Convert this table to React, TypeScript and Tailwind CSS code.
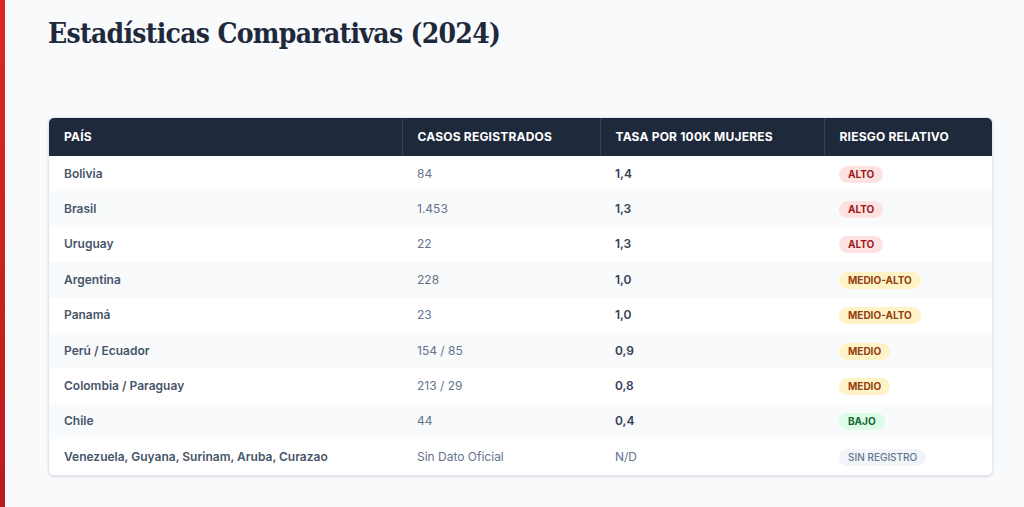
const ROWS = [
  { pais: "Bolivia", casos: "84", tasa: "1,4", riesgo: "ALTO" },
  { pais: "Brasil", casos: "1.453", tasa: "1,3", riesgo: "ALTO" },
  { pais: "Uruguay", casos: "22", tasa: "1,3", riesgo: "ALTO" },
  { pais: "Argentina", casos: "228", tasa: "1,0", riesgo: "MEDIO-ALTO" },
  { pais: "Panamá", casos: "23", tasa: "1,0", riesgo: "MEDIO-ALTO" },
  { pais: "Perú / Ecuador", casos: "154 / 85", tasa: "0,9", riesgo: "MEDIO" },
  { pais: "Colombia / Paraguay", casos: "213 / 29", tasa: "0,8", riesgo: "MEDIO" },
  { pais: "Chile", casos: "44", tasa: "0,4", riesgo: "BAJO" },
  { pais: "Venezuela, Guyana, Surinam, Aruba, Curazao", casos: "Sin Dato Oficial", tasa: "N/D", riesgo: "SIN REGISTRO" },
];

const BADGE: Record<string, string> = {
  ALTO: "bg-[#fee2e2] text-[#991b1b] font-bold",
  "MEDIO-ALTO": "bg-[#fef3c7] text-[#92400e] font-bold",
  MEDIO: "bg-[#fef3c7] text-[#92400e] font-bold",
  BAJO: "bg-[#dcfce7] text-[#166534] font-bold",
  "SIN REGISTRO": "bg-[#f1f5f9] text-[#64748b] font-medium",
};

export default function App() {
  return (
    <div className="flex h-[507px] w-[1024px] overflow-hidden bg-[#f8fafc] font-['Inter',sans-serif]">
      {/* accent strip */}
      <div className="w-[5px] shrink-0 bg-gradient-to-b from-[#dc2626] to-[#b91c1c]" />

      <div className="flex-1 pl-[43px] pr-[31px] pt-[16px]">
        <h1 className="font-['DejaVu_Serif_Condensed','DejaVu_Serif',serif] text-[28px] font-bold leading-[36px] tracking-[-0.7px] text-[#1e293b]">
          Estadísticas Comparativas (2024)
        </h1>

        <div className="mt-[65px] overflow-hidden rounded-md border border-[#e2e8f0] bg-white shadow-sm">
          <table className="w-full table-fixed border-collapse text-left">
            <colgroup>
              <col className="w-[353px]" />
              <col className="w-[198px]" />
              <col className="w-[224px]" />
              <col />
            </colgroup>
            <thead>
              <tr className="h-[38px] bg-[#1e293b] text-[12px] font-bold uppercase tracking-[0.2px] text-white">
                <th className="px-[15px]">País</th>
                <th className="border-l border-[#334155] px-[15px]">Casos Registrados</th>
                <th className="border-l border-[#334155] px-[15px]">Tasa por 100k Mujeres</th>
                <th className="border-l border-[#334155] px-[15px]">Riesgo Relativo</th>
              </tr>
            </thead>
            <tbody>
              {ROWS.map((r, i) => (
                <tr key={r.pais} className={`h-[35.4px] text-[12px] ${i % 2 === 1 ? "bg-[#f8fafc]" : "bg-white"}`}>
                  <td className="px-[15px] font-semibold text-[#475569]">{r.pais}</td>
                  <td className="px-[15px] text-[#64748b]">{r.casos}</td>
                  <td className={`px-[15px] ${r.tasa === "N/D" ? "font-normal text-[#64748b]" : "font-semibold text-[#334155]"}`}>
                    {r.tasa}
                  </td>
                  <td className="px-[15px]">
                    <span className={`inline-block rounded-full px-[9px] py-[2px] text-[10px] leading-[13px] ${BADGE[r.riesgo]}`}>
                      {r.riesgo}
                    </span>
                  </td>
                </tr>
              ))}
            </tbody>
          </table>
        </div>
      </div>
    </div>
  );
}
